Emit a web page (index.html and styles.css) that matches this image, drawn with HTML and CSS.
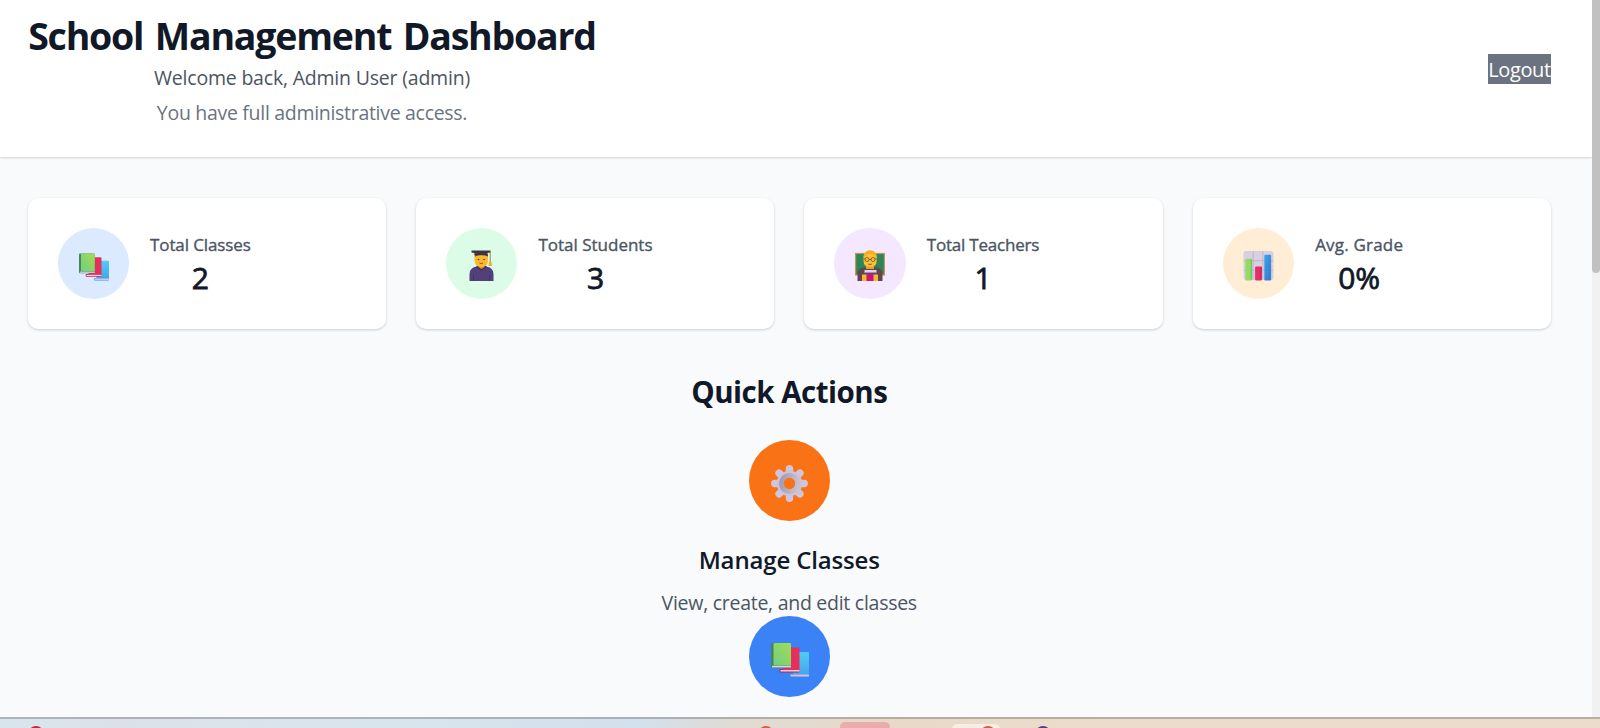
FILE: index.html
```html
<!DOCTYPE html>
<html lang="en">
<head>
<meta charset="utf-8">
<title>School Management Dashboard</title>
<link rel="stylesheet" href="styles.css">
</head>
<body>
<svg class="defs" width="0" height="0" aria-hidden="true">
  <defs>
    <linearGradient id="green" x1="1" y1="0" x2="0" y2="1"><stop offset="0" stop-color="#a4dc55"/><stop offset="1" stop-color="#6fcf80"/></linearGradient>
    <linearGradient id="blue" x1="0" y1="0" x2="0" y2="1"><stop offset="0" stop-color="#50cdf8"/><stop offset="1" stop-color="#45a6e8"/></linearGradient>
    <linearGradient id="navy" x1="0" y1="0" x2="1" y2="1"><stop offset="0" stop-color="#37a6ee"/><stop offset="1" stop-color="#3975c4"/></linearGradient>
    <linearGradient id="ring" x1="0" y1="0.4" x2="1" y2="0.6"><stop offset="0" stop-color="#a49db3"/><stop offset="1" stop-color="#c7c1cf"/></linearGradient>
    <symbol id="books" viewBox="0 0 38 34">
      <rect x="19" y="31" width="19" height="3" rx="1" fill="#398fd0"/>
      <rect x="22" y="9" width="16" height="22.500" rx="1" fill="url(#blue)"/>
      <rect x="19.500" y="31.500" width="18.500" height="2" fill="#cfc3ef"/>
      <rect x="8.500" y="26" width="20" height="3.500" rx="1" fill="#b52253"/>
      <rect x="12" y="4.500" width="16.500" height="22.500" rx="1" fill="#e62f5d"/>
      <rect x="9.500" y="27" width="19" height="1.500" fill="#f3d3e9"/>
      <rect x="0" y="0" width="20" height="25" rx="1" fill="#46845a"/>
      <rect x="2.500" y="0" width="17.500" height="22.500" rx="1" fill="url(#green)"/>
      <rect x="1" y="22.800" width="19" height="1.600" fill="#d8d5eb"/>
    </symbol>
    <symbol id="student" viewBox="0 0 25 31">
      <path d="M0.500 31V24Q0.500 17.500 8 16.500H17Q24.500 17.500 24.500 24V31Z" fill="#52407a"/>
      <path d="M7 17L12.500 20.500L18 17L16 15H9Z" fill="#3d3159"/>
      <path d="M9.500 14H15.500V17L12.500 19L9.500 17Z" fill="#e49a20"/>
      <path d="M5.500 4H19V10Q19 17 12.300 17Q5.500 17 5.500 10Z" fill="#fcb929"/>
      <path d="M5.500 4H19V6.500Q12 4 6 6.500Z" fill="#624044"/>
      <circle cx="9.500" cy="9.500" r=".8" fill="#563525"/><circle cx="15" cy="9.500" r=".8" fill="#563525"/>
      <path d="M10.500 13Q12.300 14 14 13" fill="none" stroke="#b53d29"/>
      <path d="M2.500 0.600H21.500V2.500L18.500 3V5H5.500V3L2.500 2.500Z" fill="#3e344a"/>
      <path d="M21.200 1.500V12" stroke="#bb7634" stroke-width="1"/><path d="M20 12H22.500L23 16H19.500Z" fill="#f3ac38"/>
      <path d="M4.500 25V31M20.500 25V31" stroke="#3d315e" stroke-width=".7"/>
    </symbol>
    <symbol id="teacher" viewBox="0 0 30 31">
      <rect x=".6" y="3.500" width="28.800" height="21.500" fill="#2c8658" stroke="#c49353" stroke-width="1.200"/>
      <path d="M2.500 31V23Q3 18 9 17.500H21Q27 18 27.500 23V31Z" fill="#624450"/>
      <path d="M7 31V24.500H23V31Z" fill="#fcb728"/>
      <path d="M11 16H19V19H11Z" fill="#e0a030"/>
      <path d="M8.500 7Q9 .5 15 .5Q21.500 .5 21.700 7V11Q21.500 17 15 17Q8.600 17 8.500 11Z" fill="#fec034"/>
      <path d="M8.500 8Q9 .5 15 .5Q21.500 .5 21.700 8Q19 3.500 15 4Q11 3.500 8.500 8Z" fill="#f2ad28"/>
      <g fill="none" stroke="#594237" stroke-width=".7"><circle cx="12" cy="9.500" r="2"/><circle cx="18" cy="9.500" r="2"/><path d="M14 9.500H16M8.600 9H10M20 9H21.600M13 14Q15 15 17 14"/></g>
      <rect x="9.500" y="20" width="12" height="3" fill="#dcd3ef"/><rect x="9.500" y="22.500" width="12" height="1" fill="#455b87"/>
      <rect x="11.500" y="23.500" width="7" height="7.500" fill="#c51773"/>
    </symbol>
    <symbol id="chart" viewBox="0 0 32 31">
      <rect x=".5" y=".5" width="31" height="30" rx="2.500" fill="#d8cfdf"/>
      <path d="M10.500 1V30M20.500 1V30M1 10.500H31M1 20.500H31" stroke="#b9adc3" stroke-width=".8"/>
      <rect x="2.500" y="8.500" width="7" height="22.500" rx="1" fill="#92dc63"/>
      <path d="M8.500 9V30" stroke="#68bd60"/>
      <rect x="12.500" y="16.500" width="7" height="14.500" rx="1" fill="#e62f69"/>
      <path d="M18.500 17V30" stroke="#b5275c"/>
      <rect x="22" y="4.500" width="7" height="26.500" rx="1" fill="url(#navy)"/>
    </symbol>
    <symbol id="gear" viewBox="0 0 38 38">
      <g stroke="#cfc5df" stroke-width="7.600" stroke-linecap="round"><path d="M19 3.900V8M19 30V34.100M3.900 19H8M30 19H34.100M8.300 8.300L11 11M27 27L29.700 29.700M29.700 8.300L27 11M11 27L8.300 29.700"/></g>
      <circle cx="19" cy="19" r="10.500" fill="none" stroke="#ccc3d9" stroke-width="5"/>
      <circle cx="19" cy="19" r="8.300" fill="none" stroke="url(#ring)" stroke-width="5"/>
    </symbol>
  </defs>
</svg>
<div class="screen">
  <div class="viewport">
    <div class="page">
      <header class="header">
        <div class="intro">
          <h1 class="title">School Management Dashboard</h1>
          <p class="welcome">Welcome back, Admin User (admin)</p>
          <p class="access">You have full administrative access.</p>
        </div>
        <button class="logout">Logout</button>
      </header>
      <main class="main">
        <section class="stats">
          <article class="card"><div class="badge badge-blue"><svg class="books-sm"><use href="#books"/></svg></div><div class="stat"><p class="label label-classes">Total Classes</p><p class="value">2</p></div></article>
          <article class="card"><div class="badge badge-green"><svg class="student"><use href="#student"/></svg></div><div class="stat"><p class="label label-students">Total Students</p><p class="value">3</p></div></article>
          <article class="card"><div class="badge badge-purple"><svg class="teacher"><use href="#teacher"/></svg></div><div class="stat"><p class="label label-teachers">Total Teachers</p><p class="value">1</p></div></article>
          <article class="card"><div class="badge badge-orange"><svg class="chart"><use href="#chart"/></svg></div><div class="stat"><p class="label label-grade">Avg. Grade</p><p class="value">0%</p></div></article>
        </section>
        <section class="actions">
          <h2 class="heading">Quick Actions</h2>
          <div class="action-icon action-orange"><svg class="gear"><use href="#gear"/></svg></div>
          <h3 class="action-title">Manage Classes</h3>
          <p class="action-text">View, create, and edit classes</p>
          <div class="action-icon action-blue"><svg class="books-lg"><use href="#books"/></svg></div>
        </section>
      </main>
    </div>
    <div class="scrollbar"><div class="thumb"></div></div>
  </div>
  <footer class="taskbar">
    <i class="dot dot-red"></i><i class="dot dot-orange"></i><i class="tile tile-pink"></i><i class="tile tile-light"></i><i class="dot dot-alert"></i><i class="dot dot-purple"></i>
  </footer>
</div>
</body>
</html>
```
FILE: styles.css
```css
* { box-sizing: border-box; margin: 0; padding: 0; }
body { font-family: "Open Sans", "Noto Sans", sans-serif; background: #f9fafb; color: #111827; overflow: hidden; }
.defs { position: absolute; }
.screen { height: 728px; display: flex; flex-direction: column; }
.viewport { height: 717px; display: flex; overflow: hidden; }
.page { flex: 1; background: #f9fafc; }
.header { height: 157px; padding: 12px 40.500px 0 28px; display: flex; justify-content: space-between; align-items: flex-start; background: #fff; box-shadow: 0 1px 2px rgba(0,0,0,.16); }
.intro { width: 568px; text-align: center; white-space: nowrap; }
.title { font-size: 37.500px; line-height: 48px; font-weight: 700; letter-spacing: -1.220px; word-spacing: 3px; }
.welcome { margin-top: 3px; font-size: 19.500px; line-height: 30px; color: #4b5563; letter-spacing: -.2px; }
.access { margin-top: 5px; font-size: 19.500px; line-height: 30px; color: #6b7280; letter-spacing: -.3px; }
.logout { width: 63px; height: 30px; margin-top: 42px; border: 0; background: #6b7280; color: #fff; font: 20px/32px "Open Sans", sans-serif; letter-spacing: -.4px; white-space: nowrap; display: flex; justify-content: center; }
.main { padding: 41px 40.500px 0 27.500px; }
.stats { display: grid; grid-template-columns: repeat(4, 1fr); gap: 30px; }
.card { height: 131px; padding: 0 30px; display: flex; align-items: center; gap: 21px; background: #fff; border-radius: 10px; box-shadow: 0 1px 3px rgba(0,0,0,.14), 0 1px 2px rgba(0,0,0,.05); }
.badge { width: 71.500px; height: 71.500px; border-radius: 50%; display: flex; justify-content: center; align-items: center; }
.badge svg { margin-top: 4px; }
.badge-blue { background: #dbeafe; }
.badge-green { background: #dcfce7; }
.badge-purple { background: #f3e8ff; }
.badge-orange { background: #ffedd5; }
.books-sm { width: 30px; height: 28px; }
.badge .books-sm { margin: 6px 0 0 1px; }
.student { width: 25px; height: 31px; }
.teacher { width: 30px; height: 31px; }
.chart { width: 31px; height: 31px; }
.stat { padding-top: 3px; text-align: center; white-space: nowrap; }
.label { font-size: 17px; line-height: 24px; font-weight: 500; color: #4b5563; letter-spacing: -.1px; -webkit-text-stroke: .35px #4b5563; }
.label-students { letter-spacing: 0; }
.label-teachers { letter-spacing: -.2px; }
.label-grade { letter-spacing: .2px; }
.value { font-size: 30px; line-height: 41px; font-weight: 400; -webkit-text-stroke: .8px #111827; }
.actions { margin-top: 43px; display: flex; flex-direction: column; align-items: center; }
.heading { font-size: 29.500px; line-height: 40px; font-weight: 700; letter-spacing: -.5px; }
.action-icon { width: 81px; height: 81px; border-radius: 50%; display: flex; justify-content: center; align-items: center; }
.action-orange { margin-top: 28px; background: #f97316; }
.action-blue { background: #3b82f6; }
.gear { width: 37px; height: 37px; margin-top: 5px; }
.books-lg { width: 38px; height: 34px; margin: 7px 0 0 1px; }
.action-title { margin-top: 22px; font-size: 24px; line-height: 34px; font-weight: 600; letter-spacing: -.15px; }
.action-text { margin-top: 11px; margin-bottom: -2px; font-size: 19.500px; line-height: 30px; color: #4b5563; letter-spacing: -.27px; }
.scrollbar { width: 8.500px; background: #f1f1f1; }
.thumb { height: 273px; background: #c1c1c1; border-radius: 0 0 5px 5px; }
.taskbar { position: relative; height: 11px; overflow: hidden; border-top: 2px solid rgba(120,120,120,.45); background: linear-gradient(90deg, #d9e5ed 0, #dce1e9 7%, #d8e5ed 25%, #d3e0ed 40%, #e0dbd3 46%, #e8d9c9 56%, #ecdccc 70%, #ecdccb 100%); }
.dot, .tile { position: absolute; }
.dot { width: 16px; height: 16px; border-radius: 50%; top: 7px; }
.dot-red { left: 28px; background: #c42b35; }
.dot-orange { left: 758px; background: #d75f3c; }
.tile-pink { left: 840px; top: 3px; width: 50px; height: 20px; border-radius: 5px; background: #ebadab; }
.tile-light { left: 952px; top: 5px; width: 48px; height: 20px; border-radius: 5px; background: #f6ede3; }
.dot-alert { left: 980px; background: #d75f3c; }
.dot-purple { left: 1035px; background: #533b91; }
```
